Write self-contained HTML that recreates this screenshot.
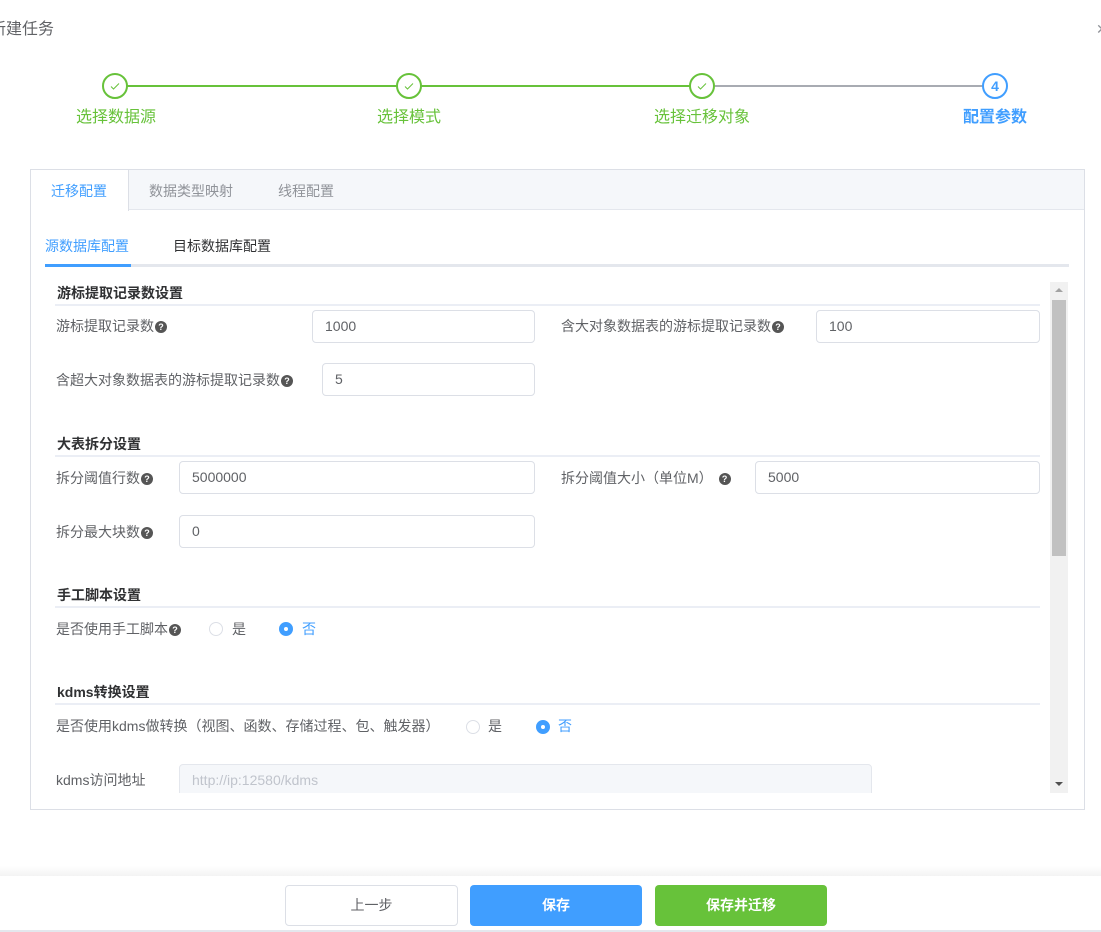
<!DOCTYPE html>
<html><head><meta charset="utf-8">
<style>
*{box-sizing:border-box;margin:0;padding:0}
body{width:1101px;height:932px;overflow:hidden;background:#fff;position:relative;font-family:"Liberation Sans","Noto Sans CJK SC",sans-serif;color:#606266;font-size:14px}
.a{position:absolute;white-space:nowrap}
.c{position:absolute;width:26px;height:26px;border-radius:50%;border:2px solid #67c23a;background:#fff;top:73px}
.c svg{position:absolute;left:5px;top:5px}
.sl{position:absolute;top:85px;height:2px}
.st{position:absolute;top:107px;font-size:16px;color:#67c23a;width:160px;text-align:center;line-height:22px}
.lbl{position:absolute;font-size:14px;color:#606266;line-height:18px;white-space:nowrap}
.q{display:inline-block;width:12px;height:12px;border-radius:50%;background:#555;color:#fff;font-size:9px;line-height:12px;text-align:center;font-weight:bold;vertical-align:1px;margin-left:1px}
.in{position:absolute;height:33px;border:1px solid #dcdfe6;border-radius:4px;padding-left:12px;line-height:31px;font-size:14px;color:#606266;background:#fff}
.h{position:absolute;left:57px;font-size:14px;font-weight:bold;color:#303133;line-height:18px}
.hl{position:absolute;left:55px;width:985px;height:2px;background:#ebeef5}
.r{position:absolute;width:14px;height:14px;border-radius:50%;border:1px solid #dcdfe6;background:#fff}
.rc{background:#409eff;border-color:#409eff}
.rc:after{content:"";position:absolute;left:4px;top:4px;width:4px;height:4px;border-radius:50%;background:#fff}
.btn{position:absolute;top:885px;height:41px;width:173px;border-radius:4px;text-align:center;line-height:41px;font-size:14px;font-weight:bold;color:#fff}
</style></head><body>
<div class="a" style="left:-10px;top:19px;font-size:16px;line-height:22px;color:#606266">新建任务</div>
<div class="a" style="left:1096px;top:21px;font-size:14px;color:#909399">✕</div>

<div class="sl" style="left:127px;width:271px;background:#67c23a"></div>
<div class="sl" style="left:421px;width:270px;background:#67c23a"></div>
<div class="sl" style="left:715px;width:268px;background:#a8abb2"></div>
<div class="c" style="left:102px"><svg width="12" height="12" viewBox="0 0 12 12"><path d="M2 6.5l2.5 2.5L10 3.5" fill="none" stroke="#67c23a" stroke-width="1"/></svg></div>
<div class="c" style="left:396px"><svg width="12" height="12" viewBox="0 0 12 12"><path d="M2 6.5l2.5 2.5L10 3.5" fill="none" stroke="#67c23a" stroke-width="1"/></svg></div>
<div class="c" style="left:689px"><svg width="12" height="12" viewBox="0 0 12 12"><path d="M2 6.5l2.5 2.5L10 3.5" fill="none" stroke="#67c23a" stroke-width="1"/></svg></div>
<div class="c" style="left:982px;border-color:#409eff;color:#409eff;text-align:center;line-height:22px;font-size:14px;font-weight:bold">4</div>
<div class="st" style="left:36px">选择数据源</div>
<div class="st" style="left:329px">选择模式</div>
<div class="st" style="left:622px">选择迁移对象</div>
<div class="st" style="left:915px;color:#409eff;font-weight:bold">配置参数</div>

<div class="a" style="left:30px;top:169px;width:1055px;height:641px;border:1px solid #dcdfe6"></div>
<div class="a" style="left:31px;top:170px;width:1053px;height:40px;background:#f5f7fa;border-bottom:1px solid #e4e7ed"></div>
<div class="a" style="left:31px;top:170px;width:98px;height:41px;background:#fff;border-right:1px solid #dcdfe6"></div>
<div class="a" style="left:51px;top:181px;color:#409eff;line-height:20px">迁移配置</div>
<div class="a" style="left:149px;top:181px;color:#909399;line-height:20px">数据类型映射</div>
<div class="a" style="left:278px;top:181px;color:#909399;line-height:20px">线程配置</div>

<div class="a" style="left:45px;top:236px;font-size:14px;color:#409eff;line-height:20px">源数据库配置</div>
<div class="a" style="left:173px;top:236px;font-size:14px;color:#303133;line-height:20px">目标数据库配置</div>
<div class="a" style="left:45px;top:264px;width:1024px;height:3px;background:#e4e7ed"></div>
<div class="a" style="left:45px;top:264px;width:86px;height:3px;background:#409eff"></div>

<div class="a" style="left:31px;top:282px;width:1038px;height:511px;overflow:hidden">
<div style="position:relative;left:-31px;top:-282px">
<div class="h" style="top:284px">游标提取记录数设置</div><div class="hl" style="top:304px"></div>
<div class="lbl" style="left:56px;top:317px">游标提取记录数<span class="q">?</span></div>
<div class="in" style="left:312px;top:310px;width:223px">1000</div>
<div class="lbl" style="left:561px;top:317px">含大对象数据表的游标提取记录数<span class="q">?</span></div>
<div class="in" style="left:816px;top:310px;width:224px">100</div>
<div class="lbl" style="left:56px;top:371px">含超大对象数据表的游标提取记录数<span class="q">?</span></div>
<div class="in" style="left:322px;top:363px;width:213px">5</div>

<div class="h" style="top:435px">大表拆分设置</div><div class="hl" style="top:455px"></div>
<div class="lbl" style="left:56px;top:469px">拆分阈值行数<span class="q">?</span></div>
<div class="in" style="left:179px;top:461px;width:356px">5000000</div>
<div class="lbl" style="left:561px;top:469px">拆分阈值大小（单位M）<span class="q" style="margin-left:6px">?</span></div>
<div class="in" style="left:755px;top:461px;width:285px">5000</div>
<div class="lbl" style="left:56px;top:523px">拆分最大块数<span class="q">?</span></div>
<div class="in" style="left:179px;top:515px;width:356px">0</div>

<div class="h" style="top:586px">手工脚本设置</div><div class="hl" style="top:606px"></div>
<div class="lbl" style="left:56px;top:620px">是否使用手工脚本<span class="q">?</span></div>
<div class="r" style="left:209px;top:622px"></div><div class="lbl" style="left:232px;top:620px">是</div>
<div class="r rc" style="left:279px;top:622px"></div><div class="lbl" style="left:302px;top:620px;color:#409eff">否</div>

<div class="h" style="top:683px">kdms转换设置</div><div class="hl" style="top:703px"></div>
<div class="lbl" style="left:56px;top:717px">是否使用kdms做转换（视图、函数、存储过程、包、触发器）</div>
<div class="r" style="left:466px;top:720px"></div><div class="lbl" style="left:488px;top:717px">是</div>
<div class="r rc" style="left:536px;top:720px"></div><div class="lbl" style="left:558px;top:717px;color:#409eff">否</div>

<div class="lbl" style="left:56px;top:771px">kdms访问地址</div>
<div class="in" style="left:179px;top:764px;width:693px;background:#f5f7fa;color:#c0c4cc;border-color:#e4e7ed">http://ip:12580/kdms</div>
</div>
<div class="a" style="left:1019px;top:0;width:18px;height:511px;background:#f1f1f1"></div>
<div class="a" style="left:1021px;top:18px;width:14px;height:256px;background:#c1c1c1"></div>
<div class="a" style="left:1024px;top:6px;width:0;height:0;border-left:4px solid transparent;border-right:4px solid transparent;border-bottom:4px solid #a3a3a3"></div>
<div class="a" style="left:1024px;top:500px;width:0;height:0;border-left:4px solid transparent;border-right:4px solid transparent;border-top:4px solid #505050"></div>
</div>

<div class="a" style="left:0;top:866px;width:1101px;height:10px;background:linear-gradient(#fff,#f3f3f3)"></div>
<div class="a" style="left:0;top:876px;width:1101px;height:56px;background:#fff"></div>
<div class="btn" style="left:285px;background:#fff;border:1px solid #dcdfe6;color:#606266;font-weight:normal;line-height:39px">上一步</div>
<div class="btn" style="left:470px;width:172px;background:#409eff">保存</div>
<div class="btn" style="left:655px;width:172px;background:#67c23a">保存并迁移</div>
<div class="a" style="left:0;top:930px;width:1101px;height:2px;background:#e4e7ed"></div>
</body></html>
